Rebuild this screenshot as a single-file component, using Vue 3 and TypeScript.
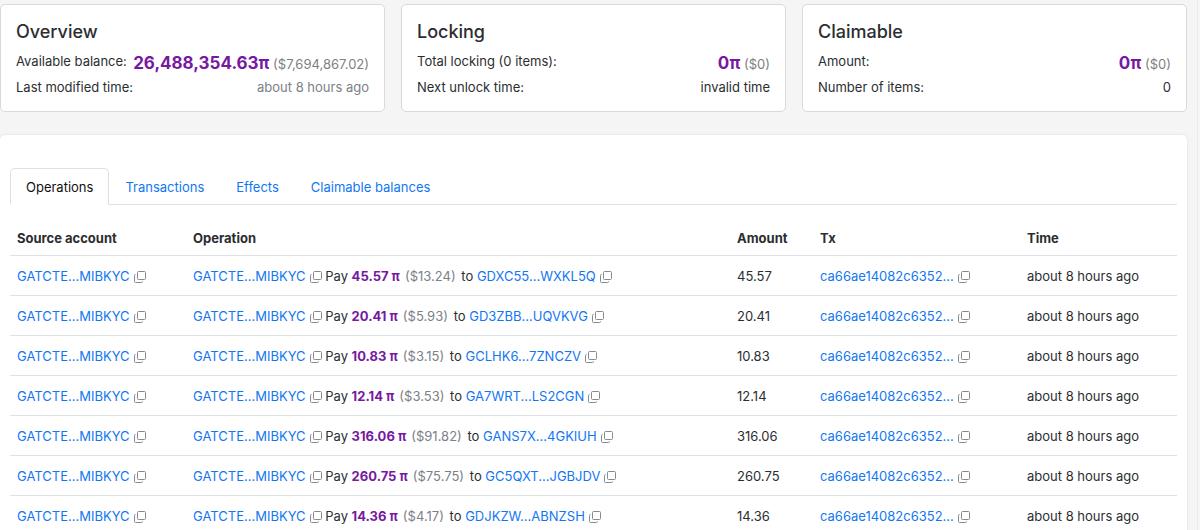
<script setup lang="ts">
import { h } from 'vue'

interface Operation {
  target: string
  amount: string
  usd: string
}

const account = 'GATCTE...MIBKYC'
const tx = 'ca66ae14082c6352...'
const time = 'about 8 hours ago'

const tabs: string[] = ['Operations', 'Transactions', 'Effects', 'Claimable balances']

const operations: Operation[] = [
  { target: 'GDXC55...WXKL5Q', amount: '45.57', usd: '$13.24' },
  { target: 'GD3ZBB...UQVKVG', amount: '20.41', usd: '$5.93' },
  { target: 'GCLHK6...7ZNCZV', amount: '10.83', usd: '$3.15' },
  { target: 'GA7WRT...LS2CGN', amount: '12.14', usd: '$3.53' },
  { target: 'GANS7X...4GKIUH', amount: '316.06', usd: '$91.82' },
  { target: 'GC5QXT...JGBJDV', amount: '260.75', usd: '$75.75' },
  { target: 'GDJKZW...ABNZSH', amount: '14.36', usd: '$4.17' },
]

const CopyButton = () =>
  h('button', { type: 'button', 'aria-label': 'Copy' }, [
    h('svg', { width: 12, height: 12, viewBox: '0 0 12 12', fill: 'none', stroke: 'currentColor', 'aria-hidden': 'true' }, [
      h('rect', { x: 3.5, y: 0.5, width: 8, height: 8, rx: 1 }),
      h('path', { d: 'M1.8 3.5H1.5a1 1 0 0 0-1 1v6a1 1 0 0 0 1 1h6a1 1 0 0 0 1-1v-.3' }),
    ]),
  ])
</script>

<template>
  <main class="page">
    <div class="cards">
      <section class="card">
        <h2>Overview</h2>
        <div class="line">
          <span>Available balance:</span>
          <span><strong class="balance">26,488,354.63π</strong> <span class="muted">($7,694,867.02)</span></span>
        </div>
        <div class="line">
          <span>Last modified time:</span>
          <span class="muted">{{ time }}</span>
        </div>
      </section>
      <section class="card">
        <h2>Locking</h2>
        <div class="line">
          <span>Total locking (0 items):</span>
          <span><strong class="balance">0π</strong> <span class="muted">($0)</span></span>
        </div>
        <div class="line">
          <span>Next unlock time:</span>
          <span>invalid time</span>
        </div>
      </section>
      <section class="card">
        <h2>Claimable</h2>
        <div class="line">
          <span>Amount:</span>
          <span><strong class="balance">0π</strong> <span class="muted">($0)</span></span>
        </div>
        <div class="line">
          <span>Number of items:</span>
          <span>0</span>
        </div>
      </section>
    </div>

    <section class="panel">
      <nav class="tabs">
        <a v-for="(tab, i) in tabs" :key="tab" href="#" class="tab" :class="{ active: i === 0 }">{{ tab }}</a>
      </nav>
      <table>
        <colgroup>
          <col class="c-source" />
          <col />
          <col class="c-amount" />
          <col class="c-tx" />
          <col class="c-time" />
        </colgroup>
        <thead>
          <tr>
            <th>Source account</th>
            <th>Operation</th>
            <th>Amount</th>
            <th>Tx</th>
            <th>Time</th>
          </tr>
        </thead>
        <tbody>
          <tr v-for="op in operations" :key="op.target">
            <td><a href="#">{{ account }}</a><CopyButton class="copy" /></td>
            <td>
              <a href="#">{{ account }}</a><CopyButton class="copy" />
              Pay <strong class="pi">{{ op.amount }} π</strong>
              <span class="muted usd">({{ op.usd }})</span> to
              <a href="#">{{ op.target }}</a><CopyButton class="copy" />
            </td>
            <td>{{ op.amount }}</td>
            <td><a href="#">{{ tx }}</a><CopyButton class="copy" /></td>
            <td>{{ time }}</td>
          </tr>
        </tbody>
      </table>
    </section>
  </main>
</template>

<style>
body {
  background: #f5f5f5;
}
</style>

<style scoped>
.page {
  box-sizing: border-box;
  margin-right: 2px;
  padding: 4px 10px 0 0;
  border-right: 1px solid #ebebeb;
  font: 13px/20px Inter, "Liberation Sans", sans-serif;
  color: #2b2e31;
}
.cards {
  display: grid;
  grid-template-columns: repeat(3, 1fr);
  gap: 16px;
}
.card {
  padding: 15px 15px 13px;
  background: #fff;
  border: 1px solid #d9d9d9;
  border-radius: 5px;
}
h2 {
  margin: 0 0 6px;
  font-size: 18px;
  font-weight: 500;
  line-height: 24px;
}
.line {
  display: flex;
  justify-content: space-between;
  line-height: 22px;
  white-space: nowrap;
}
.balance {
  font-size: 17px;
  line-height: 26px;
}
.balance,
.pi {
  color: #7719a0;
  font-weight: 700;
}
.muted {
  color: #7b8187;
}
.usd {
  margin: 0 2px 0 5px;
}
.panel {
  margin-top: 23px;
  padding: 33px 10px 24px;
  background: #fff;
  border-radius: 5px;
  box-shadow: 0 0 3px rgba(0, 0, 0, 0.1);
}
.tabs {
  display: flex;
  border-bottom: 1px solid #dee2e6;
}
a {
  color: #1277f2;
  text-decoration: none;
}
.tab {
  margin-bottom: -1px;
  padding: 8px 15px 7px;
  border: 1px solid transparent;
  border-radius: 5px 5px 0 0;
}
.tab.active {
  color: #111;
  background: #fff;
  border-color: #dee2e6 #dee2e6 #fff;
}
table {
  width: 100%;
  margin-top: 15px;
  border-collapse: collapse;
  table-layout: fixed;
}
.c-source {
  width: 176px;
}
.c-amount {
  width: 83px;
}
.c-tx {
  width: 207px;
}
.c-time {
  width: 157px;
}
th,
td {
  padding: 10px 7px 9px;
  border-bottom: 1px solid #dee2e6;
  text-align: left;
  white-space: nowrap;
}
th {
  padding: 8px 7px 7px;
  font-weight: 700;
}
.copy {
  display: inline-flex;
  margin: 0 0 0 4px;
  padding: 0;
  border: 0;
  background: none;
  color: #858b90;
  vertical-align: -2px;
}
</style>
